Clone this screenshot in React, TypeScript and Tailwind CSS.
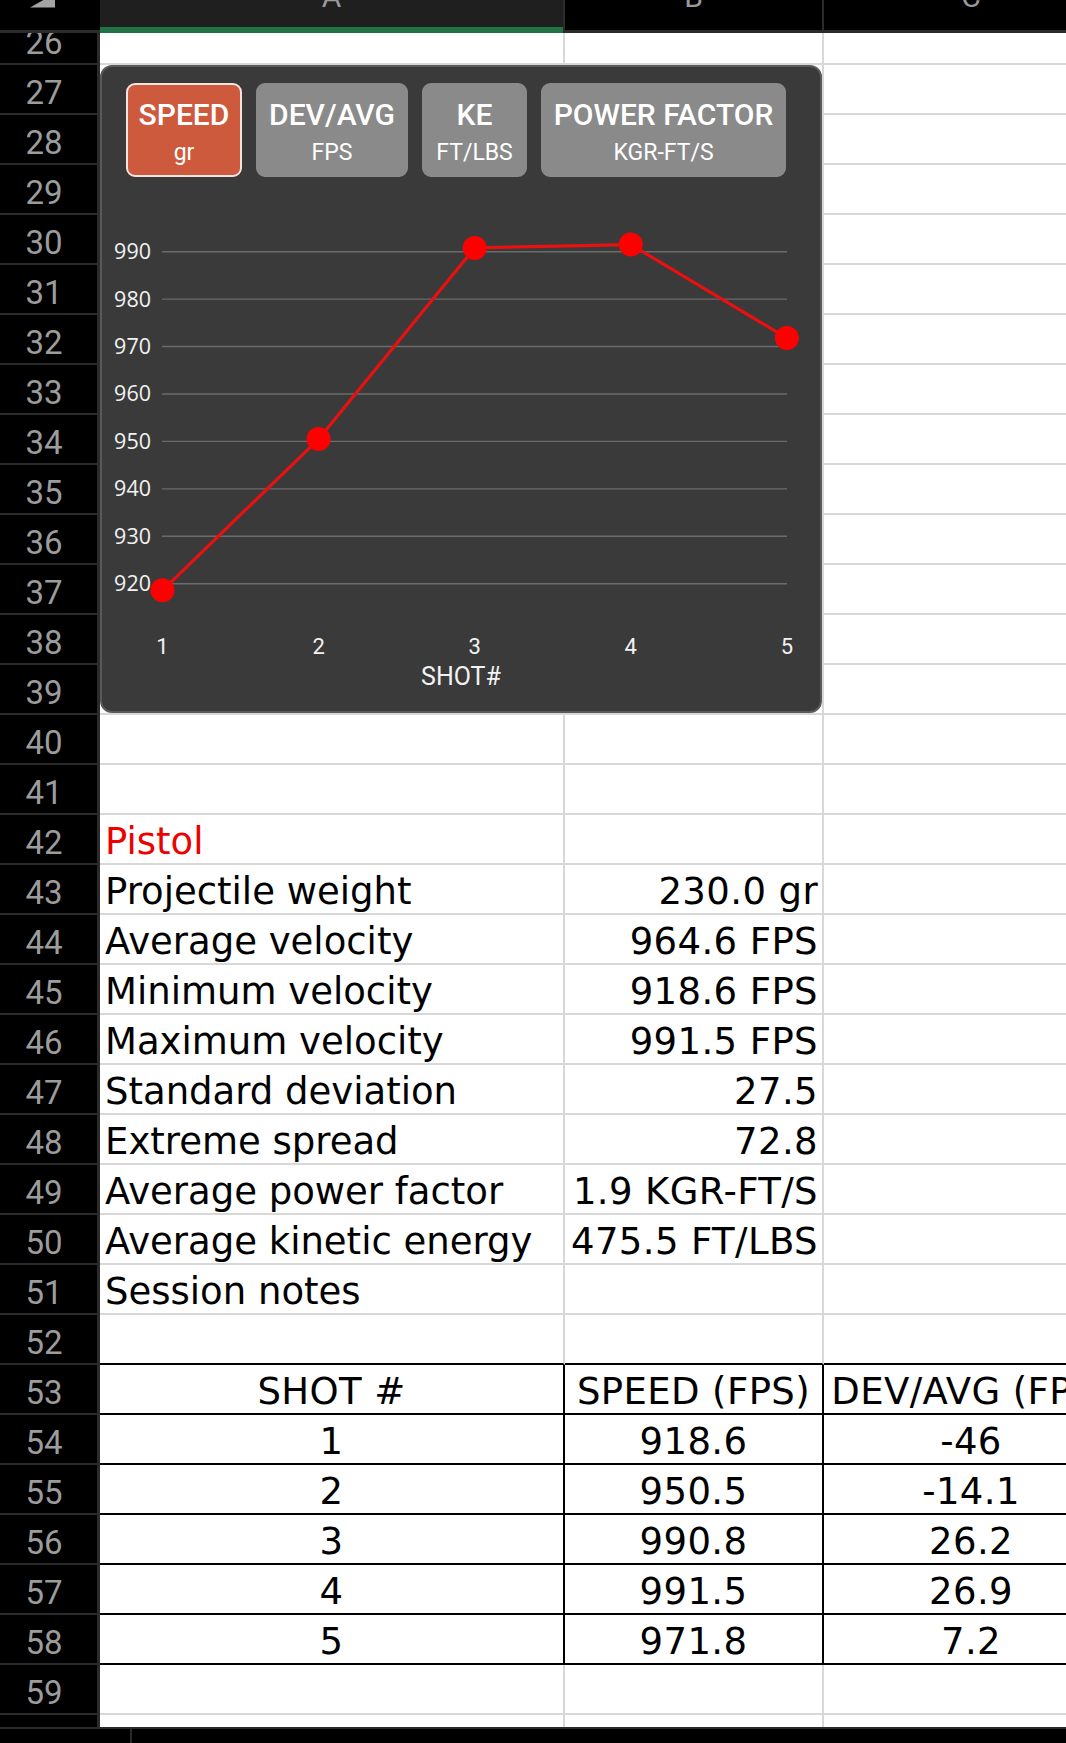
import React from "react";

const SHOTS = [918.6, 950.5, 990.8, 991.5, 971.8];
const DEV = ["-46", "-14.1", "26.2", "26.9", "7.2"];
const TICKS = [990, 980, 970, 960, 950, 940, 930, 920];

const STATS: [string, string][] = [
  ["Projectile weight", "230.0 gr"],
  ["Average velocity", "964.6 FPS"],
  ["Minimum velocity", "918.6 FPS"],
  ["Maximum velocity", "991.5 FPS"],
  ["Standard deviation", "27.5"],
  ["Extreme spread", "72.8"],
  ["Average power factor", "1.9 KGR-FT/S"],
  ["Average kinetic energy", "475.5 FT/LBS"],
];

// column widths (including their right-hand grid line)
const COL_A = "w-[465px] shrink-0";
const COL_B = "w-[259px] shrink-0";
const COL_C = "w-[296px] shrink-0";

const GRID = "border-r-2 border-b-2 border-[#d8d8d8]";
const CELL_FONT =
  "font-['DejaVu_Sans',sans-serif] text-[37px] leading-[54px] whitespace-nowrap";

function RowHead({ n }: { n: number }) {
  return (
    <div className="w-[100px] shrink-0 bg-black border-r-[3px] border-b-2 border-[#2b2b2b] flex items-end overflow-hidden">
      <div className="w-full h-[48px] shrink-0 pr-[9px] text-center font-['Roboto',sans-serif] text-[33px] leading-[55px] text-[#9c9c9c]">
        {n}
      </div>
    </div>
  );
}

function Row({
  n,
  short,
  children,
}: {
  n: number;
  short?: boolean;
  children?: React.ReactNode;
}) {
  return (
    <div className={short ? "flex h-[32px]" : "flex h-[50px]"}>
      <RowHead n={n} />
      {children ?? (
        <>
          <div className={`${COL_A} ${GRID}`} />
          <div className={`${COL_B} ${GRID}`} />
          <div className={`${COL_C} ${GRID}`} />
        </>
      )}
    </div>
  );
}

function StatRow({ n, label, value }: { n: number; label: string; value?: string }) {
  return (
    <Row n={n}>
      <div className={`${COL_A} ${GRID} ${CELL_FONT} text-black pl-[5px] overflow-visible`}>{label}</div>
      <div className={`${COL_B} ${GRID} ${CELL_FONT} text-black tracking-[0.4px] flex justify-end pr-[4px]`}>
        {value ?? ""}
      </div>
      <div className={`${COL_C} ${GRID}`} />
    </Row>
  );
}

function TableRow({ n, cells }: { n: number; cells: string[] }) {
  const base = "border-r-2 border-b-2 border-black text-center overflow-hidden text-black tracking-[0.4px]";
  return (
    <Row n={n}>
      <div className={`${COL_A} ${base} ${CELL_FONT}`}>{cells[0]}</div>
      <div className={`${COL_B} ${base} ${CELL_FONT}`}>{cells[1]}</div>
      <div className={`${COL_C} ${base} ${CELL_FONT}`}>{cells[2]}</div>
    </Row>
  );
}

function ModeButton({
  title,
  unit,
  width,
  active,
}: {
  title: string;
  unit: string;
  width: string;
  active?: boolean;
}) {
  const skin = active
    ? "border-[#f4e4df] bg-[#cd5a3d]"
    : "border-[#8a8a8a] bg-[#8a8a8a]";
  return (
    <div
      className={`${width} h-[94px] shrink-0 rounded-[9px] border-2 ${skin} flex flex-col items-center pt-[13px] text-white font-['Roboto',sans-serif]`}
    >
      <span className="text-[30px] font-medium leading-[33px] whitespace-nowrap">{title}</span>
      <span className="text-[23px] leading-[27px] mt-[8px] whitespace-nowrap">{unit}</span>
    </div>
  );
}

const yOf = (v: number) => 406.7 - (v - 920) * 4.743;
const xOf = (i: number) => 60.5 + 156.1 * i;

function SpeedChart() {
  const pts = SHOTS.map((v, i) => `${xOf(i)},${yOf(v)}`).join(" ");
  return (
    <svg width={718} height={534} className="block shrink-0">
      {TICKS.map((t) => (
        <g key={t}>
          <line x1={60} x2={685} y1={yOf(t)} y2={yOf(t)} stroke="#6b6b6b" strokeWidth={1.4} />
          <text
            x={49}
            y={yOf(t) + 7.5}
            textAnchor="end"
            fill="#f2f2f2"
            fontSize={21.5}
            fontFamily="'Open Sans', sans-serif"
          >
            {t}
          </text>
        </g>
      ))}
      {SHOTS.map((_, i) => (
        <text
          key={i}
          x={xOf(i)}
          y={477}
          textAnchor="middle"
          fill="#f2f2f2"
          fontSize={22}
          fontFamily="Roboto, sans-serif"
        >
          {i + 1}
        </text>
      ))}
      <text
        x={359}
        y={508}
        textAnchor="middle"
        fill="#f2f2f2"
        fontSize={25}
        fontFamily="Roboto, sans-serif"
      >
        SHOT#
      </text>
      <polyline points={pts} fill="none" stroke="#e81010" strokeWidth={3.2} strokeLinejoin="round" />
      {SHOTS.map((v, i) => (
        <circle key={i} cx={xOf(i)} cy={yOf(v)} r={12} fill="#ff0000" />
      ))}
    </svg>
  );
}

export default function App() {
  const emptyTop = Array.from({ length: 15 }, (_, i) => 27 + i); // rows 27..41
  return (
    <div className="relative w-[1066px] h-[1743px] overflow-hidden bg-white">
      {/* column header strip */}
      <div className="flex h-[33px]">
        <div className="w-[100px] shrink-0 bg-black border-b-[3px] border-[#2b2b2b] overflow-hidden">
          <svg width={100} height={30} className="block">
            <polygon points="30,7.5 55,7.5 55,-6.5" fill="#a3a3a3" />
          </svg>
        </div>
        <div className="w-[463px] shrink-0 bg-[#1f1f1f] border-b-[6px] border-[#217346] overflow-hidden text-center">
          <div className="mt-[-18px] font-['Roboto',sans-serif] text-[30px] leading-[30px] text-[#9a9a9a]">A</div>
        </div>
        <div className="w-[261px] shrink-0 bg-black border-l-2 border-r-2 border-b-[3px] border-[#2b2b2b] overflow-hidden text-center">
          <div className="mt-[-18px] font-['Roboto',sans-serif] text-[30px] leading-[30px] text-[#9a9a9a]">B</div>
        </div>
        <div className="w-[296px] shrink-0 bg-black border-r-2 border-b-[3px] border-[#2b2b2b] overflow-hidden text-center">
          <div className="mt-[-18px] font-['Roboto',sans-serif] text-[30px] leading-[30px] text-[#9a9a9a]">C</div>
        </div>
      </div>

      {/* sheet body */}
      <div className="relative">
        <Row n={26} short />
        {emptyTop.map((n) => (
          <Row key={n} n={n} />
        ))}
        <Row n={42}>
          <div className={`${COL_A} ${GRID} ${CELL_FONT} pl-[5px] text-[#ec0000]`}>Pistol</div>
          <div className={`${COL_B} ${GRID}`} />
          <div className={`${COL_C} ${GRID}`} />
        </Row>
        {STATS.map(([label, value], i) => (
          <StatRow key={label} n={43 + i} label={label} value={value} />
        ))}
        <StatRow n={51} label="Session notes" />
        <Row n={52}>
          <div className={`${COL_A} border-r-2 border-b-2 border-r-[#d8d8d8] border-b-black`} />
          <div className={`${COL_B} border-r-2 border-b-2 border-r-[#d8d8d8] border-b-black`} />
          <div className={`${COL_C} border-r-2 border-b-2 border-r-[#d8d8d8] border-b-black`} />
        </Row>
        <TableRow n={53} cells={["SHOT #", "SPEED (FPS)", "DEV/AVG (FPS)"]} />
        {SHOTS.map((v, i) => (
          <TableRow key={i} n={54 + i} cells={[String(i + 1), v.toFixed(1), DEV[i]]} />
        ))}
        <Row n={59} />
        {/* partially visible row 60 */}
        <div className="flex h-[12px]">
          <div className="w-[100px] shrink-0 bg-black border-r-[3px] border-[#2b2b2b]" />
          <div className={`${COL_A} border-r-2 border-[#d8d8d8]`} />
          <div className={`${COL_B} border-r-2 border-[#d8d8d8]`} />
          <div className={`${COL_C} border-r-2 border-[#d8d8d8]`} />
        </div>

        {/* floating chart panel */}
        <div className="absolute left-[100px] top-[32px] w-[722px] h-[648px] rounded-[12px] border-2 border-[#5a5a5a] bg-[#3a3a3a] pt-[16px] flex flex-col overflow-hidden">
          <div className="flex gap-[14px] pl-[24px] h-[94px] shrink-0">
            <ModeButton title="SPEED" unit="gr" width="w-[116px]" active />
            <ModeButton title="DEV/AVG" unit="FPS" width="w-[152px]" />
            <ModeButton title="KE" unit="FT/LBS" width="w-[105px]" />
            <ModeButton title="POWER FACTOR" unit="KGR-FT/S" width="w-[245px]" />
          </div>
          <SpeedChart />
        </div>
      </div>

      {/* bottom sheet bar */}
      <div className="flex h-[16px] bg-black border-t-2 border-[#2a2a2a]">
        <div className="w-[132px] shrink-0 border-r-2 border-[#2a2a2a]" />
      </div>
    </div>
  );
}
